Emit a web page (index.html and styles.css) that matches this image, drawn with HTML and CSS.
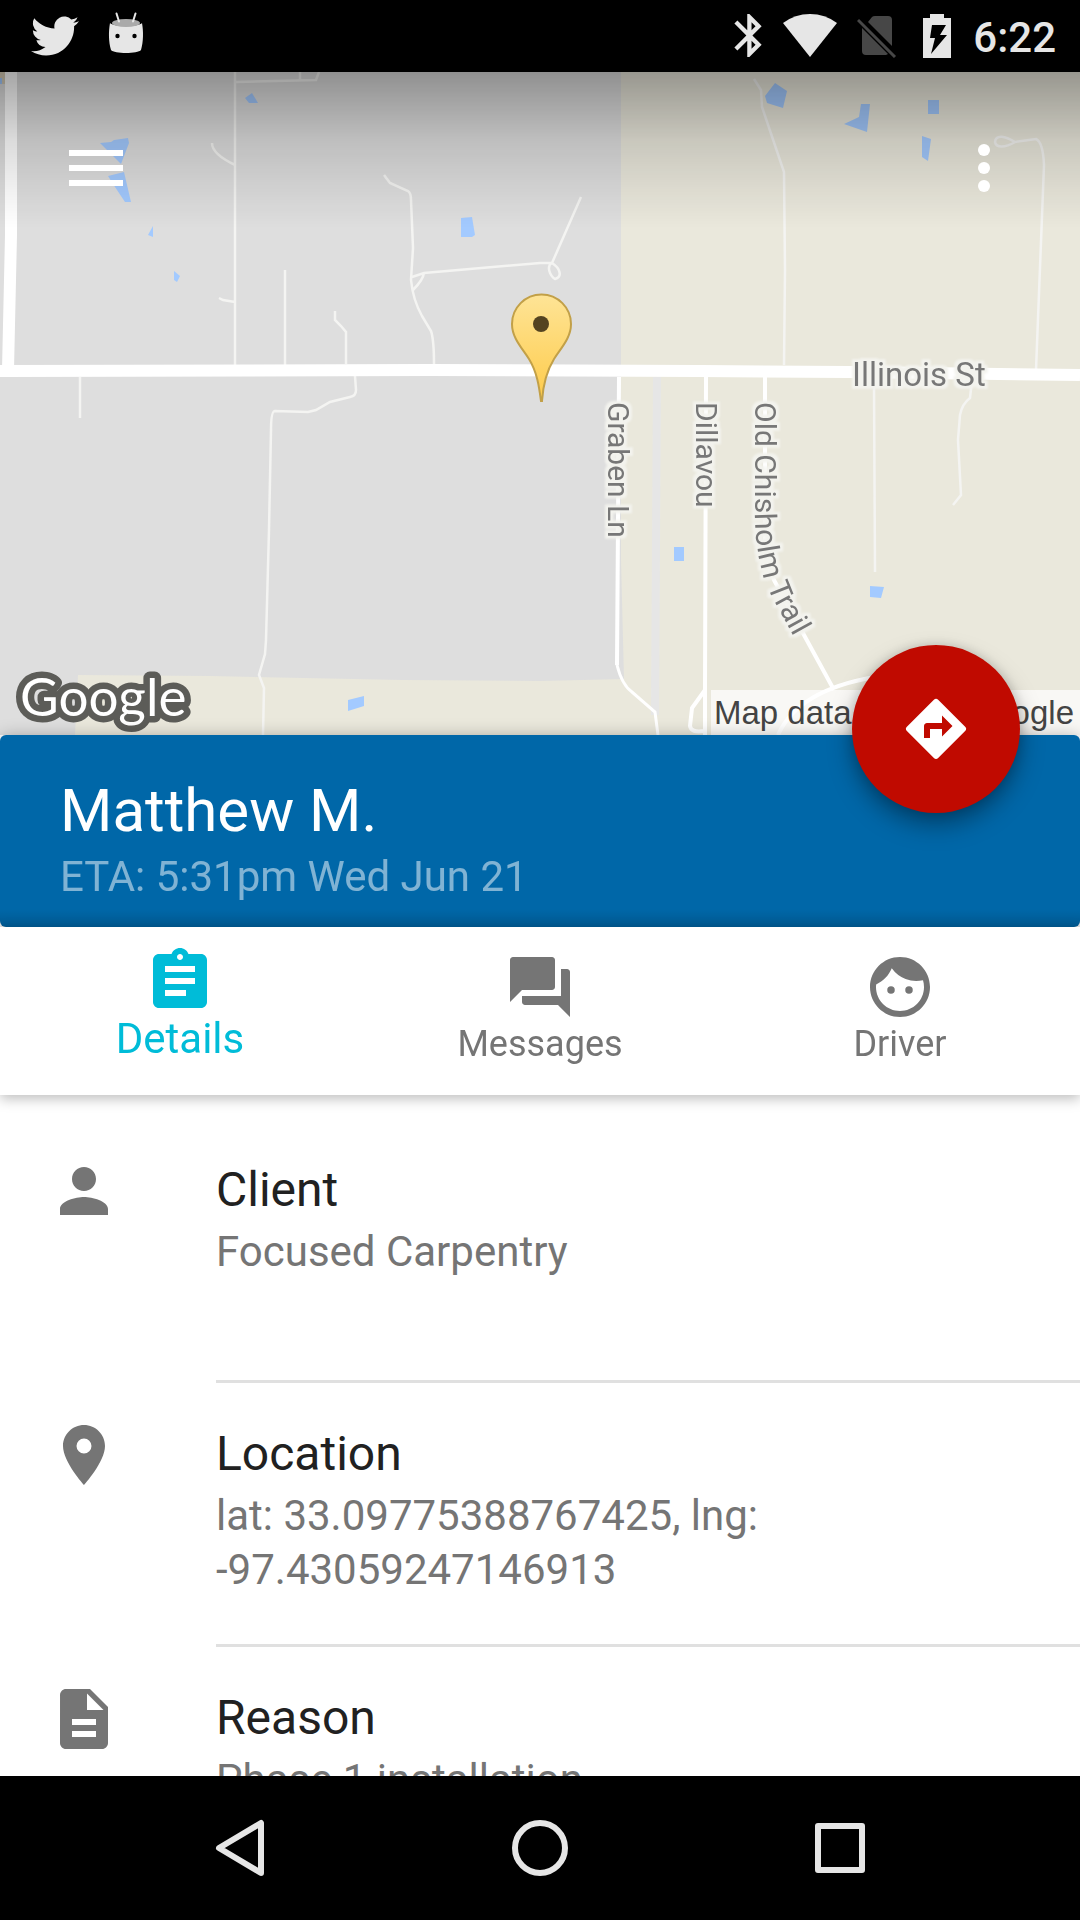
FILE: index.html
```html
<!DOCTYPE html>
<html lang="en">
<head>
<meta charset="utf-8">
<meta name="viewport" content="width=device-width, initial-scale=1">
<title>Matthew M.</title>
<link rel="stylesheet" href="styles.css">
</head>
<body>
<div class="app">
  <header class="status">
    <div class="status-group notifications">
      <svg class="status-icon" viewBox="0 0 24 24" aria-label="Twitter"><path d="M23.95 4.57a10 10 0 0 1-2.82.77 4.96 4.96 0 0 0 2.16-2.72c-.95.56-2 .96-3.13 1.18a4.92 4.92 0 0 0-8.38 4.49C7.69 8.09 4.07 6.13 1.64 3.16a4.92 4.92 0 0 0 1.52 6.57 4.9 4.9 0 0 1-2.23-.61v.06a4.92 4.92 0 0 0 3.95 4.83 5 5 0 0 1-2.21.08 4.94 4.94 0 0 0 4.6 3.42A9.87 9.87 0 0 1 0 19.54a14 14 0 0 0 7.55 2.21c9.06 0 14-7.5 14-13.98 0-.21 0-.42-.02-.63a9.94 9.94 0 0 0 2.46-2.55z"/></svg>
      <svg class="status-icon" viewBox="0 0 48 48" aria-label="Android"><path d="M9 11C12 15 38 15 41 11 42.500 19 42.500 30 40 38 37 42 13 42 10 38 7.500 30 7.500 19 9 11z"/><ellipse cx="25" cy="11" rx="14" ry="4" fill="#aaa"/><path d="M15.500 1.500l2.500 8M34.500 1.500l-2.500 8" stroke="#e6e6e6" stroke-width="2" stroke-linecap="round"/><circle cx="16.500" cy="24" r="2.200" fill="#000"/><circle cx="33.500" cy="24" r="2.200" fill="#000"/></svg>
    </div>
    <div class="status-group">
      <svg class="status-icon bluetooth" viewBox="4.35 2 14 20.500" aria-label="Bluetooth"><path d="M17.71 7.71L12 2h-1v7.59L6.41 5 5 6.41 10.59 12 5 17.59 6.41 19 11 14.41V22h1l5.71-5.71-4.3-4.29 4.3-4.29zM13 5.83l1.88 1.88L13 9.59V5.83zm1.88 10.46L13 18.17v-3.76l1.88 1.88z"/></svg>
      <svg class="status-icon wifi" viewBox="0 0 54 44" aria-label="Wi-Fi"><path d="M27 43L0 9Q12 0 27 0T54 9z"/></svg>
      <svg class="status-icon sim" viewBox="0 0 46 44" aria-label="No SIM"><path fill="#474747" d="M11 8L15 3Q16 2 18 2H31Q35 2 35 6V32zM5 14L31 40 29 41H9Q5 41 5 37z"/><path stroke="#474747" stroke-width="3" d="M1 6L38 43"/></svg>
      <svg class="status-icon battery" viewBox="0 0 30 44" aria-label="Battery charging"><path fill-rule="evenodd" d="M7 0h14v4h7v40H0V4h7zM9 11L7 24h5L8 40 24 21h-7l6-10z"/></svg>
      <time class="clock">6:22</time>
    </div>
  </header>

  <section class="map" aria-label="Map">
    <svg class="map-canvas" viewBox="0 72 1080 663" preserveAspectRatio="xMidYMid slice">
      <defs>
        <linearGradient id="pin" x1="0" y1="0" x2="0" y2="1"><stop offset="0" stop-color="#fee496"/><stop offset="1" stop-color="#fecb4a"/></linearGradient>
        <filter id="halo" x="-20%" y="-20%" width="140%" height="140%" color-interpolation-filters="sRGB">
          <feMorphology in="SourceAlpha" operator="dilate" radius="3"/>
          <feGaussianBlur stdDeviation="1" result="edge"/>
          <feFlood flood-color="#f3f3ee"/>
          <feComposite in2="edge" operator="in"/>
          <feMerge><feMergeNode/><feMergeNode in="SourceGraphic"/></feMerge>
        </filter>
        <path id="trail" d="M755 402V520Q756 550 763 575L771 595 800 648"/>
      </defs>
      <rect y="72" width="1080" height="663" fill="#dedede"/>
      <path fill="#eae8dc" d="M621 72H1080V735H75L78 675 210 676 403 680 540 681 624 679 621 560z"/>
      <path fill="#e6e6e6" d="M653 377H661L659 715H651z"/>
      <path fill="#d8ceb8" d="M0 72h5v12H0z"/>
      <g fill="#a3caff">
        <path d="M100 143L111 142 114 140 128 138 129 143 121 164 117 160zM108 176L124 172 131 202H125L115 187zM153 226V237L148 235zM174 271L180 276 177 282 174 280zM245 98L252 93 258 103H249zM461 218L472 217 475 235 472 237H461z"/>
        <path d="M775 83L787 91 783 108 767 103 765 96zM861 104H870L867 132 844 124 859 117zM928 100H939V114H928zM922 136L931 139 928 161 922 157zM674 547H684V561H674zM870 586L884 587 881 598 870 597zM348 700L364 696V706L348 711zM0 78h2v6H0z"/>
      </g>
      <g fill="none" stroke="#f4f4f2" stroke-width="2.500">
        <path d="M235 72V365M236 82L316 80 319 72M300 72V80M212 143Q212 154 235 165M219 298L223 300 235 302M285 270V365M335 311V320L341 326 346 332V364"/>
        <path d="M384 175L390 183 408 191Q411 193 411 200L413 248 411 280Q413 300 422 316L431 331Q434 340 434 364M412 277L424 273 540 263H552L581 197M552 263C546 266 550 276 555 279C563 277 560 268 552 263M424 273Q423 280 413 290"/>
        <path d="M80 377V418M355 376L356 390Q356 396 350 397L330 402 316 410 308 412 275 411Q271 411 271 430L269 530 266 640 265 654 259 675 264 688 263 735"/>
        <path d="M754 79L761 90 762 107 784 172 785 270 784 365M1044 165L1036 370M1015 142C1005 148 996 148 995 142C996 134 1005 136 1015 142L1036 139Q1043 142 1044 165M874 385L875 572M972 380L970 398Q962 404 960 415L958 440 961 495 953 505"/>
      </g>
      <g fill="none" stroke="#fff">
        <path stroke-width="12" d="M11 72V235L8 370M0 371L430 370 700 371 850 372 1080 375"/>
        <path stroke-width="4" d="M619 377L617 665M765 377V540Q767 565 774 580L834 690M706 377L705 690V735M705 690L692 708 690 726Q691 733 704 731M778 735Q798 690 875 677"/>
        <path stroke-width="3" d="M617 665Q622 685 632 692L655 712 658 735"/>
      </g>
      <g class="road-name" filter="url(#halo)">
        <text class="main-road" x="852" y="386">Illinois St</text>
        <text transform="translate(608 402) rotate(90)">Graben Ln</text>
        <text transform="translate(696 402) rotate(90)">Dillavou</text>
        <text><textPath href="#trail">Old Chisholm Trail</textPath></text>
      </g>
      <path fill="url(#pin)" stroke="#c2a048" stroke-width="2" d="M541 401C539 386 537 372 529 359C522 348 512 338 512 324A29 29 0 0 1 571 324C571 338 561 348 554 359C546 372 543 386 542 401z"/>
      <circle cx="541" cy="324" r="8" fill="#544320"/>
      <text class="maker" x="20" y="716">Google</text>
      <path fill="#fff" opacity=".7" d="M711 690h369v45H711z"/>
      <text class="credit" x="1074" y="724" text-anchor="end">Map data ©2017 Google</text>
    </svg>
    <div class="app-bar">
      <button class="icon-button" aria-label="Menu"><svg class="icon" viewBox="0 0 24 24"><path d="M3 18h18v-2H3v2zm0-5h18v-2H3v2zm0-7v2h18V6H3z"/></svg></button>
      <button class="icon-button" aria-label="More"><svg class="icon" viewBox="0 0 24 24"><circle cx="12" cy="6" r="2"/><circle cx="12" cy="12" r="2"/><circle cx="12" cy="18" r="2"/></svg></button>
    </div>
  </section>

  <section class="summary">
    <h1 class="name">Matthew M.</h1>
    <p class="eta">ETA: 5:31pm Wed Jun 21</p>
    <button class="fab" aria-label="Directions"><svg class="icon" viewBox="0 0 24 24"><path d="M21.71 11.29l-9-9a1 1 0 0 0-1.41 0l-9 9a1 1 0 0 0 0 1.41l9 9c.39.39 1.02.39 1.41 0l9-9a1 1 0 0 0 0-1.41zM14 14.5V12h-4v3H8v-4c0-.55.45-1 1-1h5V7.5l3.5 3.5-3.5 3.5z"/></svg></button>
  </section>

  <nav class="tabs">
    <button class="tab active"><svg class="icon" viewBox="0 0 24 24"><path d="M19 3h-4.18C14.4 1.84 13.3 1 12 1c-1.3 0-2.4.84-2.82 2H5c-1.1 0-2 .9-2 2v14c0 1.1.9 2 2 2h14c1.1 0 2-.9 2-2V5c0-1.1-.9-2-2-2zm-7 0c.55 0 1 .45 1 1s-.45 1-1 1-1-.45-1-1 .45-1 1-1zm2 14H7v-2h7v2zm3-4H7v-2h10v2zm0-4H7V7h10v2z"/></svg><span>Details</span></button>
    <button class="tab"><svg class="icon" viewBox="0 0 24 24"><path d="M21 6h-2v9H6v2c0 .55.45 1 1 1h11l4 4V7c0-.55-.45-1-1-1zm-4 6V3c0-.55-.45-1-1-1H3c-.55 0-1 .45-1 1v14l4-4h10c.55 0 1-.45 1-1z"/></svg><span>Messages</span></button>
    <button class="tab"><svg class="icon" viewBox="0 0 24 24"><path d="M9 11.75a1.25 1.25 0 1 0 0 2.5 1.25 1.25 0 0 0 0-2.5zm6 0a1.25 1.25 0 1 0 0 2.5 1.25 1.25 0 0 0 0-2.5zM12 2C6.48 2 2 6.48 2 12s4.48 10 10 10 10-4.48 10-10S17.52 2 12 2zm0 18c-4.41 0-8-3.59-8-8 0-.29.02-.58.05-.86 2.36-1.05 4.23-2.98 5.21-5.37a9.97 9.97 0 0 0 10.41 3.97c.21.71.33 1.47.33 2.26 0 4.41-3.59 8-8 8z"/></svg><span>Driver</span></button>
  </nav>

  <main class="content">
    <ul class="details">
      <li class="detail">
        <svg class="icon" viewBox="0 0 24 24"><path d="M12 12c2.21 0 4-1.79 4-4s-1.79-4-4-4-4 1.79-4 4 1.79 4 4 4zm0 2c-2.67 0-8 1.34-8 4v2h16v-2c0-2.66-5.33-4-8-4z"/></svg>
        <div class="detail-text"><h2 class="detail-title">Client</h2><p class="detail-value">Focused Carpentry</p></div>
      </li>
      <li class="detail">
        <svg class="icon" viewBox="0 0 24 24"><path d="M12 2C8.13 2 5 5.13 5 9c0 5.25 7 13 7 13s7-7.75 7-13c0-3.87-3.13-7-7-7zm0 9.5a2.5 2.5 0 0 1 0-5 2.5 2.5 0 0 1 0 5z"/></svg>
        <div class="detail-text"><h2 class="detail-title">Location</h2><p class="detail-value">lat: 33.09775388767425, lng: -97.43059247146913</p></div>
      </li>
      <li class="detail">
        <svg class="icon" viewBox="0 0 24 24"><path d="M14 2H6c-1.1 0-1.99.9-1.99 2L4 20c0 1.1.89 2 1.99 2H18c1.1 0 2-.9 2-2V8l-6-6zm2 16H8v-2h8v2zm0-4H8v-2h8v2zm-3-5V3.500L18.500 9H13z"/></svg>
        <div class="detail-text"><h2 class="detail-title">Reason</h2><p class="detail-value">Phase 1 installation</p></div>
      </li>
    </ul>
  </main>

  <footer class="system-nav">
    <button class="nav-button" aria-label="Back"><svg class="icon" viewBox="0 0 72 72"><path d="M57 11V61L15 36z"/></svg></button>
    <button class="nav-button" aria-label="Home"><svg class="icon" viewBox="0 0 72 72"><circle cx="36" cy="36" r="25"/></svg></button>
    <button class="nav-button" aria-label="Recent apps"><svg class="icon" viewBox="0 0 72 72"><rect x="14" y="14" width="44" height="44"/></svg></button>
  </footer>
</div>
</body>
</html>
```
FILE: styles.css
```css
* { box-sizing: border-box; }
body { margin: 0; font-family: Roboto, sans-serif; background: #fff; }
h1, h2, p, ul { margin: 0; padding: 0; font-weight: 400; }
button { border: 0; padding: 0; background: none; color: inherit; font: inherit; }
.icon { width: 72px; height: 72px; flex: none; display: block; fill: currentColor; }

.app { display: flex; flex-direction: column; height: 100vh; }

.status { display: flex; justify-content: space-between; align-items: center; height: 72px; flex: none; padding: 0 24px; background: #000; color: #e6e6e6; }
.status-group { display: flex; align-items: center; gap: 20px; }
.notifications { padding-left: 7px; gap: 22px; }
.status-icon { height: 48px; width: 48px; fill: #e6e6e6; }
.bluetooth { width: 30px; height: 44px; }
.wifi { width: 54px; height: 44px; }
.sim { width: 46px; height: 44px; }
.battery { width: 30px; height: 44px; }
.clock { padding-top: 4px; font-size: 42px; line-height: 48px; font-weight: 500; }

.map { position: relative; flex: 0 0 663px; overflow: hidden; }
.map-canvas { display: block; width: 100%; height: 100%; }
.map::after { content: ""; position: absolute; inset: 0; pointer-events: none; background: linear-gradient(rgba(0,0,0,.35), rgba(0,0,0,.14) 68px, rgba(0,0,0,.06) 116px, transparent 156px); }
.road-name { font-size: 30px; fill: #777; }
.main-road { font-size: 33px; }
.maker { font-family: Lato, sans-serif; font-size: 53px; fill: #fff; stroke: #5c5c58; stroke-width: 13px; stroke-linejoin: round; paint-order: stroke; }
.credit { font-family: "Liberation Sans", sans-serif; font-size: 33px; fill: #444; }
.app-bar { position: absolute; z-index: 1; top: 0; left: 0; right: 0; height: 192px; padding: 0 60px; display: flex; align-items: center; justify-content: space-between; color: #fff; }

.summary { position: relative; z-index: 1; flex: none; padding: 40px 60px 26px; border-radius: 6px; background: linear-gradient(transparent calc(100% - 18px), rgba(0,0,0,.14)) #0067a8; box-shadow: 0 3px 18px rgba(0,0,0,.35); color: #fff; }
.name { font-size: 60px; line-height: 72px; }
.eta { margin-top: 6px; font-size: 42px; line-height: 48px; color: rgba(255,255,255,.5); }
.fab { position: absolute; top: -90px; right: 60px; width: 168px; height: 168px; border-radius: 50%; display: grid; place-items: center; background: #c00a00; box-shadow: 0 12px 24px rgba(0,0,0,.35), 0 0 12px rgba(0,0,0,.15); }

.tabs { position: relative; z-index: 2; display: grid; grid-template-columns: repeat(3, 1fr); height: 168px; flex: none; background: #fff; box-shadow: 0 4px 12px rgba(0,0,0,.25); color: #757575; }
.tab { display: flex; flex-direction: column; align-items: center; padding-top: 24px; font-size: 36px; line-height: 42px; }
.tab.active { padding-top: 18px; font-size: 42px; line-height: 44px; color: #00bcd8; }

.content { flex: 1; min-height: 0; overflow-y: auto; scrollbar-width: none; }
.details { list-style: none; padding-top: 24px; }
.detail { display: flex; padding-left: 48px; gap: 96px; color: #757575; }
.detail .icon { margin-top: 36px; }
.detail-text { flex: 1; min-height: 264px; padding: 40px 48px 24px 0; border-bottom: 3px solid #e0e0e0; }
.detail-title { font-size: 48px; line-height: 62px; color: #212121; }
.detail-value { margin-top: 4px; font-size: 42px; line-height: 54px; }

.system-nav { display: flex; justify-content: center; align-items: center; gap: 180px; height: 144px; flex: none; background: #000; }
.nav-button { display: grid; place-items: center; width: 120px; height: 144px; }
.nav-button .icon { fill: none; stroke: #e6e6e6; stroke-width: 6px; stroke-linejoin: round; }
```
